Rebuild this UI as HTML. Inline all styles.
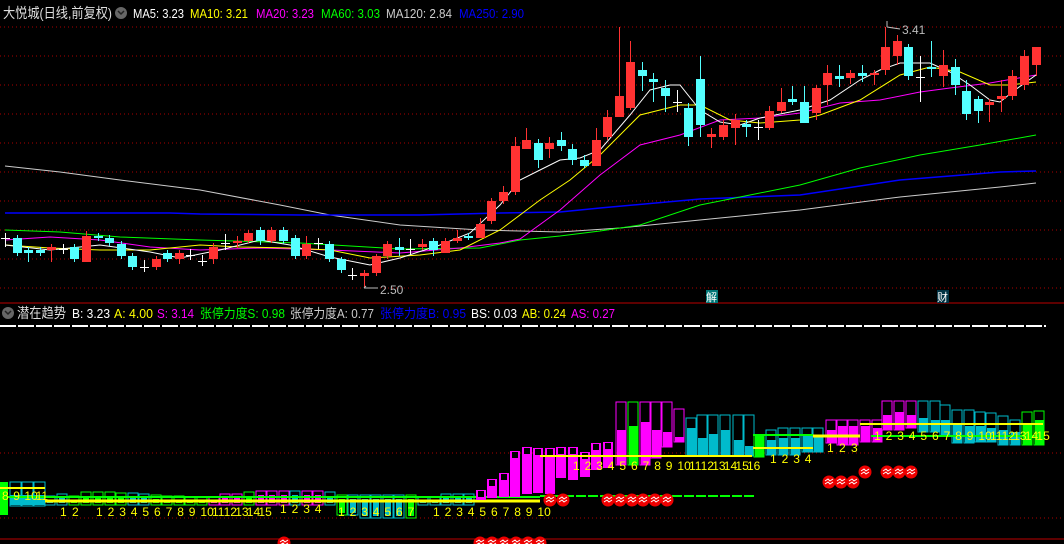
<!DOCTYPE html>
<html><head><meta charset="utf-8"><style>
html,body{margin:0;padding:0;background:#000;width:1064px;height:544px;overflow:hidden}
svg{position:absolute;left:0;top:0}
.t{font-family:"Liberation Sans","Noto Sans CJK SC",sans-serif;font-size:13px}
</style></head><body>
<svg id="s" width="1064" height="544" xmlns="http://www.w3.org/2000/svg"></svg>
<script>
const s=document.getElementById('s');let h='';
function L(x1,y1,x2,y2,c,w,d){h+=`<line x1="${x1}" y1="${y1}" x2="${x2}" y2="${y2}" stroke="${c}" stroke-width="${w||1}" ${d?`stroke-dasharray="${d}"`:''}/>`;}
function R(x,y,w,hh,f,st){h+=`<rect x="${x}" y="${y}" width="${w}" height="${hh}" fill="${f||'none'}" ${st?`stroke="${st}" stroke-width="1"`:''}/>`;}
function T(x,y,t,c,fs,tl){h+=`<text class="t" x="${x}" y="${y}" fill="${c}" ${fs?`style="font-size:${fs}px"`:''} ${tl?`textLength="${tl}" lengthAdjust="spacingAndGlyphs"`:''}>${t}</text>`;}
function P(pts,c,w){h+=`<polyline points="${pts.map(p=>p.join(',')).join(' ')}" fill="none" stroke="${c}" stroke-width="${w||1}"/>`;}
function C(x,y,r){h+=`<circle cx="${x}" cy="${y}" r="${r}" fill="#e00"/><path d="M${x-4} ${y-1}l3-2 2 2 3-2M${x-4} ${y+2}l3-2 2 2 3-2" stroke="#fff" fill="none" stroke-width="1"/>`;}
for(let i=0;i<10;i++){L(0,27+i*29,1064,27+i*29,'#a00',1,'1 3');}
L(0,303,1064,303,'#b00',1);
L(0,453,1064,453,'#a00',1,'1 3');L(0,518,1064,518,'#a00',1,'1 3');
L(0,539,1064,539,'#b00',1);
L(0,326,1046,326,'#fff',2,'16 2');
P([[5,166],[60,172],[120,180],[200,190],[280,205],[330,215],[400,225],[480,230],[520,231],[560,232],[620,228],[700,220],[800,210],[900,197],[1000,187],[1036,183]],'#ccc');
P([[5,213],[170,213],[200,214],[300,215],[420,215],[500,213],[560,212],[600,208],[700,199],[800,195],[900,180],[1000,172],[1036,171]],'#00f',1.5);
P([[5,230],[60,232],[120,237],[200,240],[300,243],[400,249],[480,248],[520,240],[560,236],[600,231],[640,225],[700,205],[750,195],[800,185],[860,168],[920,155],[980,145],[1036,135]],'#0f0');
P([[5,240],[50,237],[100,240],[150,247],[200,250],[260,248],[330,250],[400,253],[460,248],[500,243],[520,239],[560,210],[600,175],[640,145],[680,135],[720,120],[760,118],[800,113],[840,103],[880,100],[920,92],[950,88],[990,83],[1036,75]],'#f0f');
P([[5,245],[50,248],[100,250],[150,250],[200,245],[240,247],[290,248],[330,250],[370,258],[420,255],[460,250],[500,230],[540,200],[570,180],[600,155],[640,115],[680,105],[700,105],[730,120],[760,123],[800,120],[820,115],[860,100],[900,75],[930,67],[960,72],[990,85],[1010,85],[1036,82]],'#ff0');
P([[5,245],[50,250],[100,245],[150,252],[180,258],[220,250],[260,240],[290,245],[330,257],[370,265],[400,258],[440,245],[470,233],[500,205],[520,180],[540,170],[560,160],[580,158],[600,150],[630,115],[650,90],[670,85],[680,85],[700,110],[720,122],[740,125],[760,118],[800,110],[830,100],[860,80],[880,70],[900,63],[930,63],[950,72],[970,85],[990,100],[1000,102],[1015,90],[1036,75]],'#fff');
const K=[['x',238,238,233,247],['c',238,253],['c',250,253,247,262],['c',250,253],['r',247,250,244,262],['x',249,249,244,254],['c',247,259],['r',236,262,231,262],['c',236,238],['c',238,243],['c',244,256],['c',256,267],['x',267,267,260,272],['r',259,267],['c',253,259],['r',253,259,250,264],['x',255,255,249,260],['x',261,261,255,266],['r',247,259,243,264],['x',243,243,234,250],['r',241,243,236,248],['r',233,241,230,243],['c',230,241,227,245],['r',230,241,227,243],['c',230,241],['c',238,256],['r',244,256,236,259],['x',243,243,238,249],['c',244,259],['c',259,270,257,273],['x',275,275,268,280],['r',273,276,270,288],['r',256,273,254,276],['r',244,256],['c',247,250,238,256],['x',249,249,239,255],['r',244,247,239,250],['c',241,250,238,256],['r',241,253,238,253],['r',238,241,230,243],['c',236,238,233,240],['r',224,238,218,238],['r',201,221,198,224],['r',192,201,186,204],['r',146,192,137,195],['r',140,149,128,149],
['c',143,160,139,168],['r',143,149,137,158],['c',140,146,132,151],['c',149,160,144,165],['c',160,166,155,168],['r',140,166,128,166],['r',117,137,110,140],['r',96,117,27,117],['r',62,108,41,110],['c',70,76,62,91],['c',79,82,73,102],['c',88,96,80,112],['x',102,102,90,112],['c',108,137,103,146],['c',79,125,56,137],['r',134,137,128,148],['r',125,137,120,140],['r',120,128,114,145],['c',124,127,120,137],['x',127,127,120,140],['r',111,128,106,130],['r',102,111,88,113],['c',99,102,86,105],['c',102,123,86,123],['r',88,113,85,120],['r',73,85,65,105],['c',76,79,65,87],['r',73,78,70,84],['c',73,76,65,82],['r',73,75,70,85],['r',47,70,27,75],['r',41,56,35,65],['c',47,76,44,80],['x',77,77,56,102],['c',67,69,41,77],['r',65,76,50,87],['c',67,85,59,95],['c',91,114,80,120],['c',99,111,96,123],['r',102,105,99,122],['r',96,99,80,112],['r',76,96,70,100],['r',56,85,50,90],['r',47,65,47,76]];
K.forEach((k,i)=>{const x=Math.round(5+i*11.58);const col=k[0]=='r'?'#ff3232':k[0]=='c'?'#54ffff':'#fff';
const hi=k[3]!==undefined?k[3]:k[1]-3,lo=k[4]!==undefined?k[4]:k[2]+3;
L(x+0.5,hi,x+0.5,lo,col,1);
if(k[0]=='x'){L(x-4,k[1]+0.5,x+5,k[1]+0.5,col,1);}else{R(x-4,k[1],9,Math.max(2,k[2]-k[1]),col);}
});
L(364,288,378,288,'#bbb');L(366,286,364,288,'#bbb');T(380,294,'2.50','#bbb',12);
L(887,27,900,29,'#bbb');L(887,21,887,27,'#bbb');T(902,34,'3.41','#bbb',12);
R(706,290,12,13,'#077');T(706,301,'解','#fff',11);
R(937,290,12,13,'#034');T(937,301,'财','#fff',11);
T(3,18,'大悦城(日线,前复权)','#ddd',14,109);
h+=`<circle cx="121" cy="13" r="6" fill="#666"/><path d="M118 11l3 3 3-3" stroke="#222" stroke-width="1.5" fill="none"/>`;
T(133,18,'MA5: 3.23','#fff',13,51);T(190,18,'MA10: 3.21','#ff0',13,58);T(256,18,'MA20: 3.23','#f0f',13,58);T(321,18,'MA60: 3.03','#0f0',13,59);T(386,18,'MA120: 2.84','#ccc',13,66);T(459,18,'MA250: 2.90','#00f',13,65);
h+=`<circle cx="8" cy="313" r="6" fill="#666"/><path d="M5 311l3 3 3-3" stroke="#222" stroke-width="1.5" fill="none"/>`;
T(17,318,'潜在趋势','#ddd',14,49);T(72,318,'B: 3.23','#fff',13,38);T(114,318,'A: 4.00','#ff0',13,39);T(157,318,'S: 3.14','#f0f',13,37);
T(200,318,'张停力度S: 0.98','#0f0',13,85);T(290,318,'张停力度A: 0.77','#ccc',13,84);T(380,318,'张停力度B: 0.95','#00f',13,86);T(471,318,'BS: 0.03','#fff',13,46);T(522,318,'AB: 0.24','#ff0',13,44);T(571,318,'AS: 0.27','#f0f',13,44);
R(0,482,8,33,'#0f0');
[[10,482],[22,482],[34,482]].forEach(a=>R(a[0],a[1],11,24,null,'#0bc'));
R(10,495,35,10,'#0bc');
const LB=[[45,'#0bc',496,505],[57,'#0bc',494,505],[69,'#0f0',496,505],[81,'#0f0',492,505],[93,'#0f0',492,505],[105,'#0f0',492,505],[116,'#0f0',493,505],[128,'#0bc',493,505],[139,'#0bc',494,505],[151,'#0f0',495,505],[162,'#0f0',496,505],[174,'#0f0',496,505],[185,'#0f0',497,505],[197,'#0f0',497,505],[209,'#f0f',497,505],[220,'#f0f',494,505],[232,'#f0f',494,505],[244,'#0f0',492,505],[256,'#f0f',491,505],[267,'#f0f',491,505],[279,'#f0f',491,505],[290,'#0bc',491,505],[302,'#f0f',491,505],[313,'#f0f',491,505],[325,'#0bc',492,505],[337,'#0f0',495,515],[348,'#0bc',495,515],[360,'#0bc',495,518],[371,'#0bc',495,518],[383,'#0bc',495,518],[394,'#0bc',495,518],[406,'#0f0',495,518],[418,'#0bc',497,505],[430,'#0bc',497,505],[441,'#0bc',494,505],[453,'#0bc',494,505],[464,'#0bc',494,505]];
LB.forEach(b=>{R(b[0],b[2],10,b[3]-b[2],null,b[1]);R(b[0]+2,b[2]+4,6,b[3]-b[2]-6,b[1]);});
L(0,488,45,488,'#ff0',2);L(0,497,540,497,'#0f0',2);L(45,501,540,501,'#ff0',3);
const MB=[[476,490,500],[487,479,498],[499,473,497],[510,451,497],[522,447,494],[533,448,493],[545,448,494],[556,447,478],[568,447,480],[580,452,477],[591,443,470],[603,442,468]];
MB.forEach(b=>{R(b[0],b[1],10,b[2]-b[1],'#f0f');R(b[0]+2,b[1]+1,6,6,'#000');});
const RB=[[616,402,465,'#f0f',430],[628,402,465,'#0f0',426],[640,402,465,'#f0f',422],[651,402,458,'#f0f',430],[662,402,447,'#f0f',432],[674,409,442,'#f0f',437],[686,418,456,'#0bc',428],[697,415,456,'#0bc',438],[708,415,456,'#0bc',434],[720,415,456,'#0bc',430],[733,415,456,'#0bc',440],[744,415,456,'#0bc',446],[754,435,457,'#0f0',435],[766,430,455,'#0bc',440],[778,428,455,'#0bc',438],[790,428,455,'#0bc',438],[802,428,452,'#0bc',436],[813,428,452,'#0bc',436],[826,420,443,'#f0f',430],[837,420,445,'#f0f',426],[848,420,445,'#f0f',426],[860,420,442,'#f0f',426],[872,420,442,'#f0f',428],[882,401,430,'#f0f',415],[894,401,430,'#f0f',412],[906,401,428,'#f0f',415],[918,401,432,'#0bc',418],[930,401,432,'#0bc',420],[940,405,436,'#0bc',420],[952,410,443,'#0bc',425],[964,410,443,'#0bc',426],[975,412,442,'#0bc',426],[986,413,442,'#0bc',428],[998,416,445,'#0bc',430],[1010,420,445,'#0bc',432],[1022,412,445,'#0f0',423],[1034,411,445,'#0f0',420]];
RB.forEach(b=>{R(b[0],b[1],10,b[2]-b[1],null,b[3]);R(b[0]+1,b[4],9,b[2]-b[4],b[3]);R(b[0]+3,b[1]+3,4,Math.max(0,b[4]-b[1]-5),'#000');});
L(540,456,752,456,'#ff0',2);L(753,448,813,448,'#ff0',2);L(813,436,860,436,'#ff0',3);L(860,424,1043,424,'#ff0',2);L(871,436,1043,436,'#0f0',2);L(753,435,813,435,'#0f0',2);
L(540,496,754,496,'#0f0',2,'10 2');
function N(arr,x0,dx,y){arr.forEach((n,i)=>T(x0+i*dx,y,n,'#ff0',12));}
N(['8','9','10','11'],2,11.2,500);
N(['1','2'],60,12,516);
N(['1','2','3','4','5','6','7','8','9','10','11','12','13','14','15'],96,11.6,516);
N(['1','2','3','4'],280,11.6,513);
N(['1','2','3','4','5','6','7'],338,11.6,516);
N(['1','2','3','4','5','6','7','8','9','10'],433,11.6,516);
N(['1','2','3','4','5','6','7','8','9','10','11','12','13','14','15','16'],573,11.6,470);
N(['1','2','3','4'],770,11.6,463);
N(['1','2','3'],827,12,452);
N(['1','2','3','4','5','6','7','8','9','10','11','12','13','14','15'],874,11.6,440);
[550,563,608,620,632,643,655,667].forEach(x=>C(x,500,6.5));
[829,841,853].forEach(x=>C(x,482,6.5));C(865,472,6.5);[887,899,911].forEach(x=>C(x,472,6.5));
[284,480,492,504,516,528,540].forEach(x=>C(x,543,6.5));
s.innerHTML=h;
</script>
</body></html>
